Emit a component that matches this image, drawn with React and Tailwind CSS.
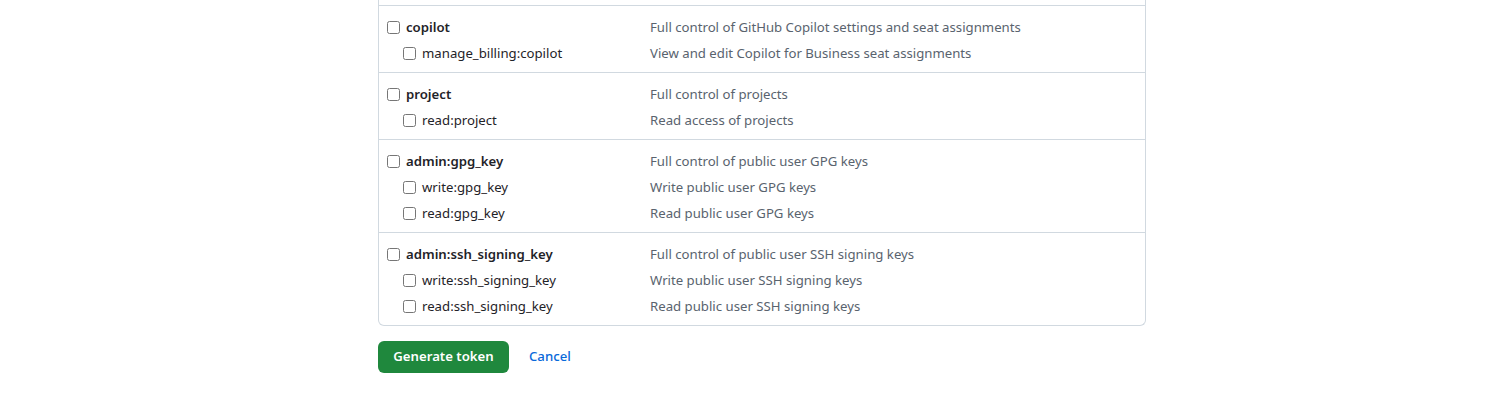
import React from "react";

const sections = [
  [
    ["copilot", "Full control of GitHub Copilot settings and seat assignments"],
    ["manage_billing:copilot", "View and edit Copilot for Business seat assignments"],
  ],
  [
    ["project", "Full control of projects"],
    ["read:project", "Read access of projects"],
  ],
  [
    ["admin:gpg_key", "Full control of public user GPG keys"],
    ["write:gpg_key", "Write public user GPG keys"],
    ["read:gpg_key", "Read public user GPG keys"],
  ],
  [
    ["admin:ssh_signing_key", "Full control of public user SSH signing keys"],
    ["write:ssh_signing_key", "Write public user SSH signing keys"],
    ["read:ssh_signing_key", "Read public user SSH signing keys"],
  ],
];

function Box() {
  return <span className="inline-block w-[13px] h-[13px] shrink-0 rounded-[2.5px] border border-[#767676] bg-white" />;
}

export default function App() {
  return (
    <div
      className="w-[1512px] h-[408px] bg-white text-[13.2px] text-[#1f2328]"
      style={{ fontFamily: '"Noto Sans", sans-serif' }}
    >
      <div className="ml-[378px] w-[768px]">
        <div className="border-x border-b border-[#d1d9e0] rounded-b-[6px]">
          <div className="h-[5px]" />
          {sections.map((rows, si) => (
            <div key={si} className="border-t border-[#d1d9e0] pt-[8px] pb-[6px] pl-[8px]">
              {rows.map(([name, desc], ri) => (
                <div key={ri} className="grid grid-cols-[263px_1fr] h-[26px] items-center">
                  <div className={`flex items-center gap-[6px] ${ri === 0 ? "" : "pl-[16px]"}`}>
                    <Box />
                    <span className={`leading-[20px] -mt-[1px] ${ri === 0 ? "font-semibold" : ""}`}>{name}</span>
                  </div>
                  <div className="text-[#59636e] leading-[20px] -mt-[1px]">{desc}</div>
                </div>
              ))}
            </div>
          ))}
        </div>
        <div className="mt-[15px] flex items-center gap-[20px]">
          <button className="h-[32px] w-[131px] rounded-[6px] bg-[#1f883d] text-white font-semibold text-[13.2px]">
            Generate token
          </button>
          <span className="text-[#0969da] font-medium">Cancel</span>
        </div>
      </div>
    </div>
  );
}
